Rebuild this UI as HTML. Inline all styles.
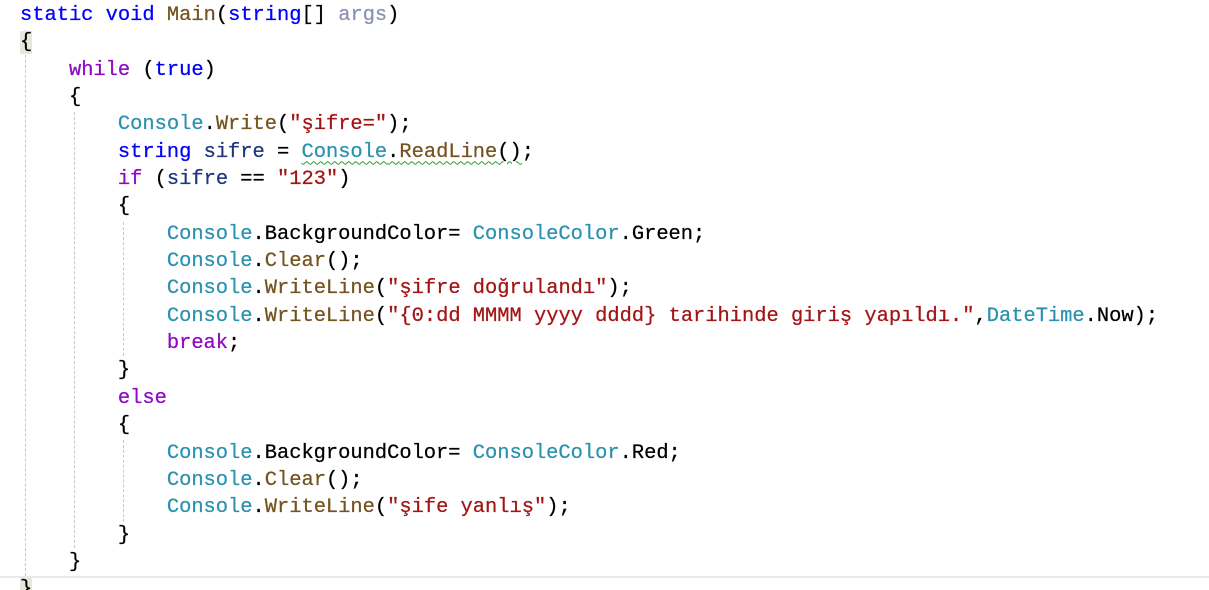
<!DOCTYPE html>
<html><head><meta charset="utf-8"><style>
html,body{margin:0;padding:0;background:#fff;width:1209px;height:590px;overflow:hidden;position:relative}
pre{margin:0;position:absolute;left:20px;top:2px;font-family:"Liberation Mono",monospace;font-size:20.4px;line-height:27.35px;color:#000;white-space:pre;-webkit-text-stroke:0.25px currentColor}
.k{color:#0000ff}.c{color:#8f08c4}.m{color:#74531f}.t{color:#2b91af}.s{color:#a31515}.v{color:#1f377f}.p{color:#8a91b4}
.w{text-decoration:underline wavy #2a9d2a;text-decoration-thickness:1px;text-underline-offset:4px}
.g{position:absolute;width:0;border-left:1px dashed #c8c8c8}
.hl{background:#e6e8dc}
.sep{position:absolute;left:0;top:576px;width:1209px;height:2px;background:#e8e8ef}
</style></head><body>
<div class="g" style="left:25px;top:30px;height:546px"></div>
<div class="g" style="left:74px;top:112px;height:436px"></div>
<div class="g" style="left:123px;top:222px;height:134px"></div>
<div class="g" style="left:123px;top:440px;height:82px"></div>
<div class="sep"></div>
<pre><span class="k">static</span> <span class="k">void</span> <span class="m">Main</span>(<span class="k">string</span>[] <span class="p">args</span>)
<span class="hl">{</span>
    <span class="c">while</span> (<span class="k">true</span>)
    {
        <span class="t">Console</span>.<span class="m">Write</span>(<span class="s">"şifre="</span>);
        <span class="k">string</span> <span class="v">sifre</span> = <span class="w"><span class="t">Console</span>.<span class="m">ReadLine</span>()</span>;
        <span class="c">if</span> (<span class="v">sifre</span> == <span class="s">"123"</span>)
        {
            <span class="t">Console</span>.BackgroundColor= <span class="t">ConsoleColor</span>.Green;
            <span class="t">Console</span>.<span class="m">Clear</span>();
            <span class="t">Console</span>.<span class="m">WriteLine</span>(<span class="s">"şifre doğrulandı"</span>);
            <span class="t">Console</span>.<span class="m">WriteLine</span>(<span class="s">"{0:dd MMMM yyyy dddd} tarihinde giriş yapıldı."</span>,<span class="t">DateTime</span>.Now);
            <span class="c">break</span>;
        }
        <span class="c">else</span>
        {
            <span class="t">Console</span>.BackgroundColor= <span class="t">ConsoleColor</span>.Red;
            <span class="t">Console</span>.<span class="m">Clear</span>();
            <span class="t">Console</span>.<span class="m">WriteLine</span>(<span class="s">"şife yanlış"</span>);
        }
    }
<span class="hl">}</span></pre>
</body></html>
